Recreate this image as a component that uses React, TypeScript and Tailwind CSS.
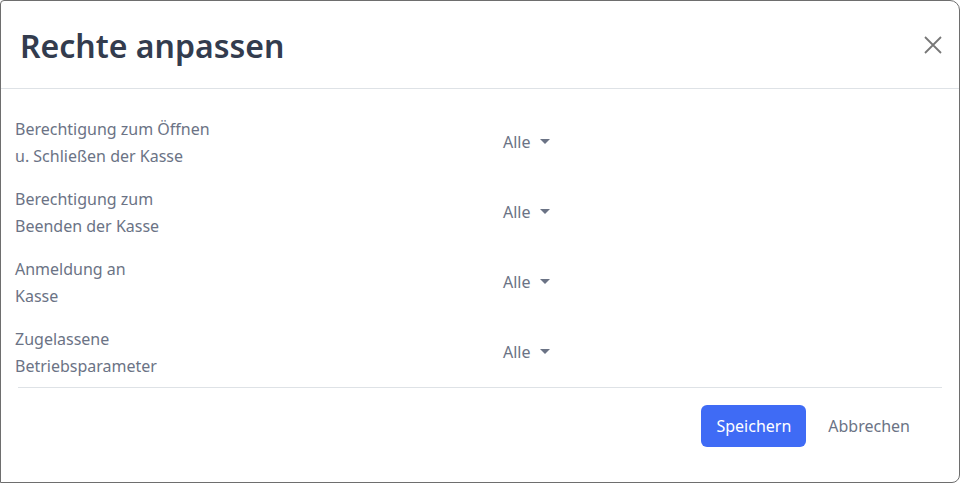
const rows = [
  ['Berechtigung zum Öffnen', 'u. Schließen der Kasse'],
  ['Berechtigung zum', 'Beenden der Kasse'],
  ['Anmeldung an', 'Kasse'],
  ['Zugelassene', 'Betriebsparameter'],
]

export default function App() {
  return (
    <div className="h-[483px] w-[960px] bg-white font-['Noto_Sans',sans-serif]">
      <div className="flex h-full flex-col rounded-tr-[10px] rounded-br-[8px] rounded-tl-[4px] border border-[#6e6e6e] bg-white">
        <div className="flex h-[88px] shrink-0 items-center justify-between border-b border-[#dee2e6] pl-[19px] pr-[10px]">
          <h1 className="pt-[3px] text-[32px] font-semibold text-[#333c4e]">Rechte anpassen</h1>
          <button className="flex h-8 w-8 items-center justify-center text-[#777]">
            <svg width="20" height="20" viewBox="0 0 20 20" fill="none" stroke="currentColor" strokeWidth="1.8">
              <path d="M2 2L18 18M18 2L2 18" />
            </svg>
          </button>
        </div>
        <div className="flex flex-col gap-4 px-[14px] pt-[27px] pb-[7px]">
          {rows.map((r, i) => (
            <div key={i} className="flex items-center">
              <div className="w-[488px] text-[16px] leading-[27px] text-[#6b7385]">
                <div>{r[0]}</div>
                <div>{r[1]}</div>
              </div>
              <button className="mb-[3px] flex items-center gap-[9px] text-[16px] text-[#6b7385]">
                Alle
                <svg width="10" height="6" viewBox="0 0 10 6" fill="currentColor">
                  <path d="M0 0H10L5 5Z" />
                </svg>
              </button>
            </div>
          ))}
        </div>
        <div className="mx-[17px] border-t border-[#dee2e6]" />
        <div className="flex justify-end gap-[7px] pr-[33px] pt-[17px]">
          <button className="h-[42px] rounded-[6px] bg-[#3f6bf5] px-[15px] text-[16px] text-white">Speichern</button>
          <button className="h-[42px] pl-[15px] pr-[16px] text-[16px] text-[#6b7385]">Abbrechen</button>
        </div>
      </div>
    </div>
  )
}
